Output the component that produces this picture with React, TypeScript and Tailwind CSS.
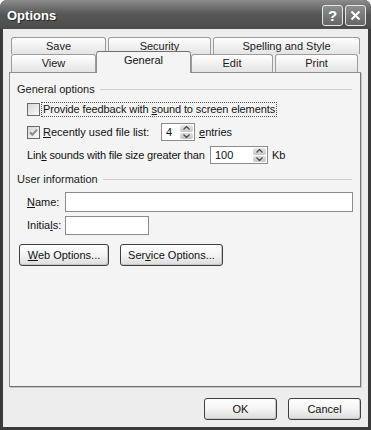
import React from "react";

const FONT = "font-['Liberation_Sans',Arial,sans-serif]";

function U({ children }: { children: React.ReactNode }) {
  return <span className="underline underline-offset-[1px] decoration-[1px]">{children}</span>;
}

function Tab({ label, w, active }: { label: string; w: string; active?: boolean }) {
  if (active) {
    return (
      <div
        className={`${w} relative z-10 -mb-px h-[22px] rounded-t-[3px] border border-b-0 border-[#8f8f8f] border-t-[#6f6f6f] bg-[#f4f4f4] flex items-start justify-center pt-[2px] text-[11px] leading-[13px] text-[#111]`}
      >
        {label}
      </div>
    );
  }
  return (
    <div
      className={`${w} h-full rounded-t-[3px] border border-b-0 border-[#9c9c9c] bg-gradient-to-b from-white to-[#e4e4e4] flex items-center justify-center text-[11px] leading-[13px] text-[#1a1a1a]`}
    >
      {label}
    </div>
  );
}

function Checkbox({ checked }: { checked?: boolean }) {
  return (
    <svg width="13" height="13" viewBox="0 0 13 13" className="shrink-0">
      <defs>
        <linearGradient id="cbg" x1="0" y1="0" x2="1" y2="1">
          <stop offset="0" stopColor="#d6d6d6" />
          <stop offset="1" stopColor="#fbfbfb" />
        </linearGradient>
      </defs>
      <rect x="0.5" y="0.5" width="12" height="12" fill="url(#cbg)" stroke="#6a6a6a" />
      {checked && (
        <path d="M3 6.3 L5.3 8.8 L10 3.6" fill="none" stroke="#8c8c8c" strokeWidth="2" />
      )}
    </svg>
  );
}

function SpinBox({ value, w }: { value: string; w: string }) {
  return (
    <div className={`${w} shrink-0 h-[18px] border border-[#8c8c8c] bg-white flex items-center`}>
      <span className="flex-1 pl-[4px] text-[11px] leading-[13px]">{value}</span>
      <div className="w-[15px] h-full flex flex-col p-px gap-px">
        <div className="flex-1 rounded-[2px] bg-gradient-to-b from-[#e6e6e6] to-[#c8c8c8] flex items-center justify-center">
          <svg width="7" height="4" viewBox="0 0 7 4">
            <path d="M0.5 3.5 L3.5 0.5 L6.5 3.5" fill="none" stroke="#4a4a4a" strokeWidth="1.3" />
          </svg>
        </div>
        <div className="flex-1 rounded-[2px] bg-gradient-to-b from-[#e0e0e0] to-[#c4c4c4] flex items-center justify-center">
          <svg width="7" height="4" viewBox="0 0 7 4">
            <path d="M0.5 0.5 L3.5 3.5 L6.5 0.5" fill="none" stroke="#4a4a4a" strokeWidth="1.3" />
          </svg>
        </div>
      </div>
    </div>
  );
}

function Button({ children, w }: { children: React.ReactNode; w: string }) {
  return (
    <div
      className={`${w} h-[22px] rounded-[3px] border border-[#3f3f3f] bg-gradient-to-b from-white via-[#f4f4f4] to-[#dcdcdc] shadow-[inset_-1px_-1px_0_#c6c6c6] flex items-center justify-center text-[11px] leading-[13px] text-[#111]`}
    >
      <span className="whitespace-nowrap">{children}</span>
    </div>
  );
}

function GroupLabel({ label }: { label: string }) {
  return (
    <div className="h-[14px] flex items-center pl-[7px] pr-[8px]">
      <span className="text-[11px] leading-[13px] text-[#1a1a1a]">{label}</span>
      <div className="flex-1 h-px bg-[#cfcfcf] ml-[5px]" />
    </div>
  );
}

export default function App() {
  return (
    <div className={`w-[371px] h-[430px] bg-white ${FONT}`}>
      <div className="w-full h-full rounded-t-[7px] bg-[#3a3a3a] flex flex-col overflow-hidden">
        {/* title bar */}
        <div className="h-[29px] shrink-0 bg-gradient-to-b from-[#8c8c8c] via-[#565656] to-[#4c4c4c] flex items-center pl-[7px] pr-[5px]">
          <span className="text-[13px] font-bold text-white [text-shadow:1px_1px_0_#2a2a2a] mt-[2px]">
            Options
          </span>
          <div className="ml-auto flex gap-[2px] mt-[2px]">
            <div className="w-[21px] h-[21px] rounded-[3px] border border-[#e8e8e8] bg-gradient-to-b from-[#8e8e8e] to-[#666] flex items-center justify-center text-white font-bold text-[15px] leading-none">
              ?
            </div>
            <div className="w-[21px] h-[21px] rounded-[3px] border border-[#e8e8e8] bg-gradient-to-b from-[#8e8e8e] to-[#666] flex items-center justify-center">
              <svg width="11" height="11" viewBox="0 0 11 11">
                <path d="M1.5 1.5 L9.5 9.5 M9.5 1.5 L1.5 9.5" stroke="white" strokeWidth="2" />
              </svg>
            </div>
          </div>
        </div>

        {/* body */}
        <div className="flex-1 mx-[3px] mb-[3px] bg-[#ededed] pl-[6px] pr-[7px] pt-[8px] flex flex-col">
          {/* tabs */}
          <div className="h-[17px] flex gap-[2px] pl-[2px]">
            <Tab label="Save" w="w-[95px]" />
            <Tab label="Security" w="w-[103px]" />
            <Tab label="Spelling and Style" w="w-[147px]" />
          </div>
          <div className="h-[18px] flex items-end pl-[2px]">
            <Tab label="View" w="w-[85px]" />
            <Tab label="General" w="w-[95px]" active />
            <Tab label="Edit" w="w-[82px]" />
            <div className="ml-[2px] h-full flex">
              <Tab label="Print" w="w-[83px]" />
            </div>
          </div>

          {/* panel */}
          <div className="w-[352px] h-[315px] border border-[#8f8f8f] border-r-[#7a7a7a] border-b-[#6f6f6f] bg-[#f4f4f4] shadow-[1px_1px_0_#c4c4c4] text-[11px] leading-[13px] text-[#111]">
            <div className="mt-[9px]">
              <GroupLabel label="General options" />
            </div>

            <div className="mt-[6px] h-[15px] flex items-center pl-[17px]">
              <Checkbox />
              <span className="ml-px px-[1px] h-[15px] flex items-center border border-dotted border-[#555]">
                <span className="whitespace-nowrap tracking-[-0.1px]">
                  Provide feedback with <U>s</U>ound to screen elements
                </span>
              </span>
            </div>

            <div className="mt-[6px] h-[18px] flex items-center pl-[17px]">
              <Checkbox checked />
              <span className="w-[121px] shrink-0 pl-[3px] whitespace-nowrap">
                <U>R</U>ecently used file list:
              </span>
              <SpinBox value="4" w="w-[34px]" />
              <span className="ml-[4px]">
                <U>e</U>ntries
              </span>
            </div>

            <div className="mt-[5px] h-[18px] flex items-center pl-[17px]">
              <span className="w-[183px] shrink-0 whitespace-nowrap tracking-[-0.15px]">
                Lin<U>k</U> sounds with file size greater than
              </span>
              <SpinBox value="100" w="w-[58px]" />
              <span className="ml-[4px]">Kb</span>
            </div>

            <div className="mt-[8px]">
              <GroupLabel label="User information" />
            </div>

            <div className="mt-[6px] h-[20px] flex items-center pl-[17px]">
              <span className="w-[38px] shrink-0">
                <U>N</U>ame:
              </span>
              <div className="w-[288px] h-[20px] border border-[#8c8c8c] bg-white" />
            </div>

            <div className="mt-[4px] h-[19px] flex items-center pl-[17px]">
              <span className="w-[38px] shrink-0">
                Initia<U>l</U>s:
              </span>
              <div className="w-[84px] h-[19px] border border-[#8c8c8c] bg-white" />
            </div>

            <div className="mt-[9px] flex gap-[11px] pl-[9px]">
              <Button w="w-[90px]">
                <U>W</U>eb Options...
              </Button>
              <Button w="w-[103px]">
                Ser<U>v</U>ice Options...
              </Button>
            </div>
          </div>

          {/* footer */}
          <div className="mt-[11px] flex justify-end gap-[11px]">
            <Button w="w-[73px]">OK</Button>
            <Button w="w-[73px]">Cancel</Button>
          </div>
        </div>
      </div>
    </div>
  );
}
